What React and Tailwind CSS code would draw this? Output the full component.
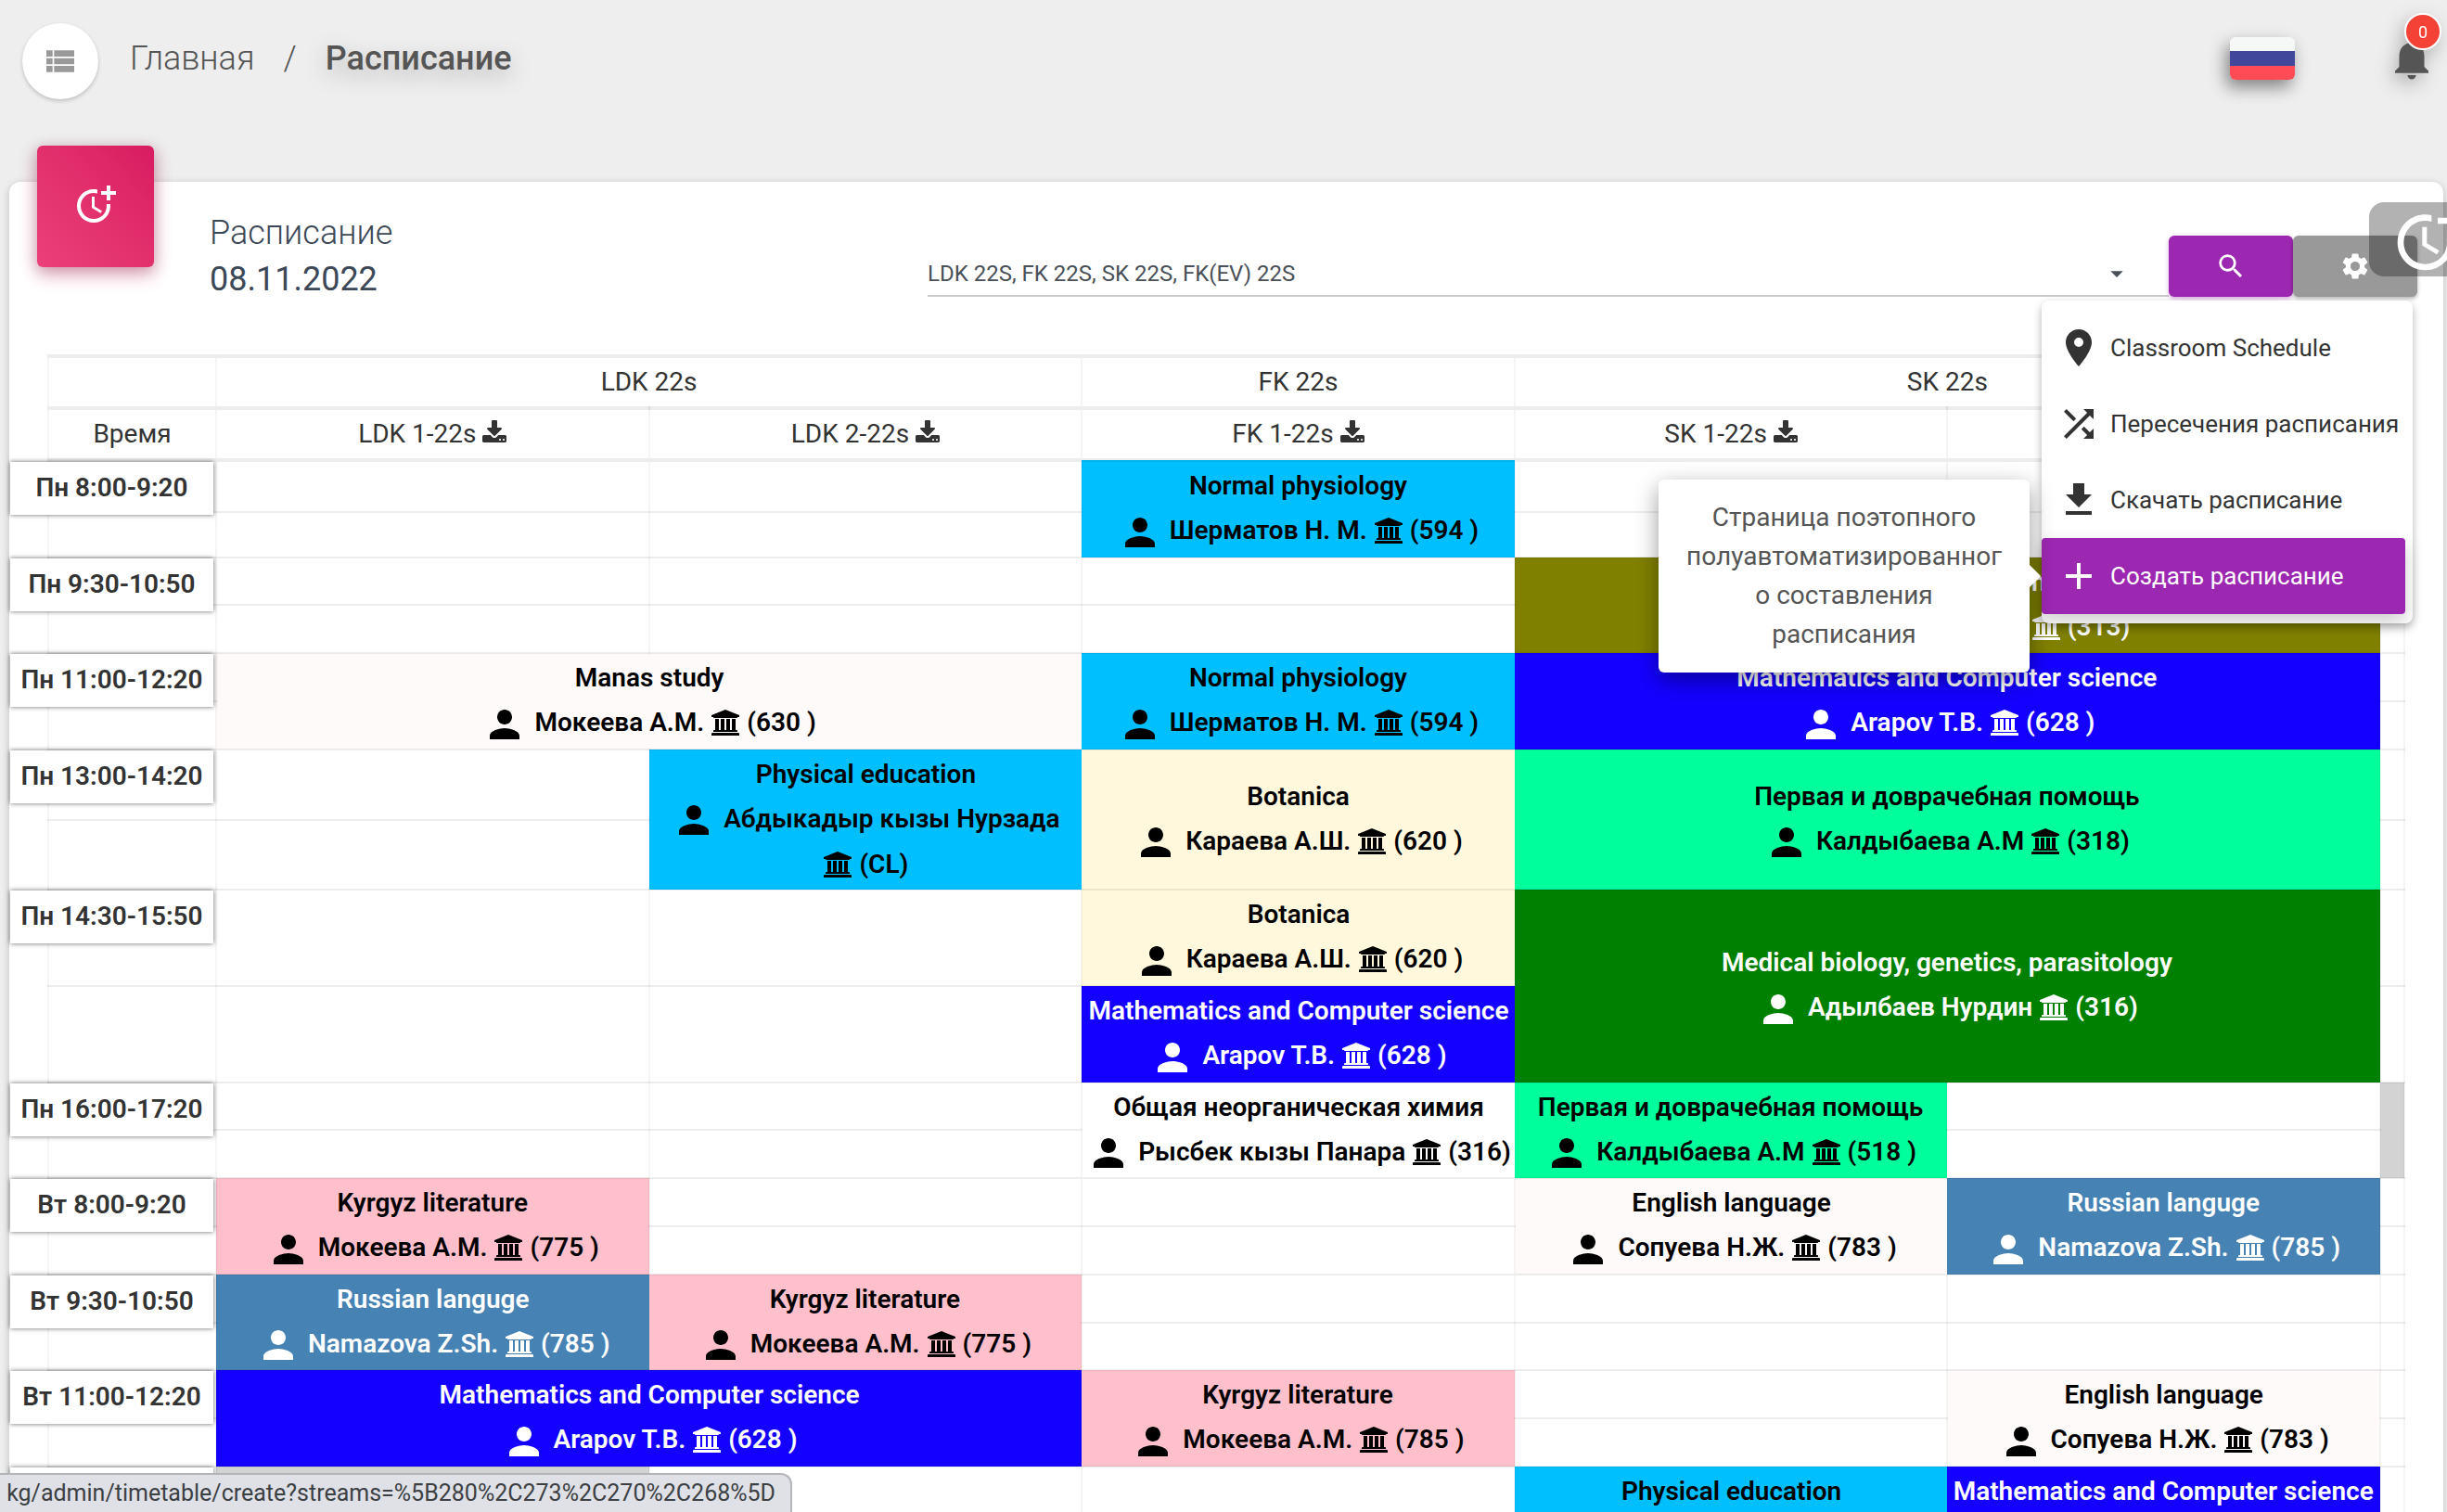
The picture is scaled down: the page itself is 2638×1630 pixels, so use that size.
import React from "react";
import {
  MdPerson, MdMoreTime, MdViewList, MdNotifications, MdSearch, MdSettings,
  MdPlace, MdShuffle, MdDownload, MdAdd, MdArrowDropDown,
} from "react-icons/md";

const COLORS = {
  sky: "bg-[#00bfff] text-black",
  snow: "bg-[#fffafa] text-black",
  corn: "bg-[#fff8dc] text-black",
  blue: "bg-[#1400ff] text-white",
  mint: "bg-[#00ff9c] text-black",
  green: "bg-[#008000] text-white",
  olive: "bg-[#808000] text-white",
  pink: "bg-[#ffc0cb] text-black",
  steel: "bg-[#4682b4] text-white",
  white: "bg-white text-black",
  grey: "bg-[#d3d3d3]",
};

const L = (color, title, teacher, room, colSpan = 1, rowSpan = 2) => ({ color, title, teacher, room, colSpan, rowSpan });
const blank = (color, rowSpan) => ({ color, colSpan: 1, rowSpan, empty: true });
const _ = null;

const physiology = () => L("sky", "Normal physiology", "Шерматов Н. М.", "(594 )");
const maths = (colSpan, rowSpan) => L("blue", "Mathematics and Computer science", "Arapov T.B.", "(628 )", colSpan, rowSpan);
const kyrgyz = (room) => L("pink", "Kyrgyz literature", "Мокеева А.М.", room);
const russian = () => L("steel", "Russian languge", "Namazova Z.Sh.", "(785 )");
const english = () => L("snow", "English language", "Сопуева Н.Ж.", "(783 )");

const ROWS = [
  { h: "h-[56px]", time: "Пн 8:00-9:20", cells: [_, _, physiology(), _, _, _] },
  { h: "h-[49px]", cells: [_, _, _, _, _] },
  { h: "h-[51px]", time: "Пн 9:30-10:50", cells: [_, _, _, L("olive", "Latin language and terminology", "Калдыбаева А.М", "(313)", 2), _] },
  { h: "h-[52px]", cells: [_, _, _, _] },
  { h: "h-[52px]", time: "Пн 11:00-12:20", cells: [L("snow", "Manas study", "Мокеева А.М.", "(630 )", 2), physiology(), maths(2, 2), _] },
  { h: "h-[52px]", cells: [_] },
  { h: "h-[76px]", time: "Пн 13:00-14:20", cells: [_, L("sky", "Physical education", "Абдыкадыр кызы Нурзада", "(CL)"), L("corn", "Botanica", "Караева А.Ш.", "(620 )"), L("mint", "Первая и доврачебная помощь", "Калдыбаева А.М", "(318)", 2), _] },
  { h: "h-[75px]", cells: [_, _] },
  { h: "h-[104px]", time: "Пн 14:30-15:50", cells: [_, _, L("corn", "Botanica", "Караева А.Ш.", "(620 )", 1, 1), L("green", "Medical biology, genetics, parasitology", "Адылбаев Нурдин", "(316)", 2), _] },
  { h: "h-[104px]", cells: [_, _, maths(1, 1), _] },
  { h: "h-[51px]", time: "Пн 16:00-17:20", cells: [_, _, L("white", "Общая неорганическая химия", "Рысбек кызы Панара", "(316)"), L("mint", "Первая и доврачебная помощь", "Калдыбаева А.М", "(518 )"), _, blank("grey", 2)] },
  { h: "h-[52px]", cells: [_, _, _] },
  { h: "h-[52px]", time: "Вт 8:00-9:20", cells: [kyrgyz("(775 )"), _, _, english(), russian(), _] },
  { h: "h-[52px]", cells: [_, _, _] },
  { h: "h-[52px]", time: "Вт 9:30-10:50", cells: [russian(), kyrgyz("(775 )"), _, _, _, _] },
  { h: "h-[51px]", cells: [_, _, _, _] },
  { h: "h-[52px]", time: "Вт 11:00-12:20", cells: [maths(2, 2), kyrgyz("(785 )"), _, english(), _] },
  { h: "h-[52px]", cells: [_, _] },
  { h: "h-[52px]", time: "Вт 13:00-14:20", cells: [blank("grey", 2), _, _, L("sky", "Physical education", "Мокеева А.М.", "(CL)"), maths(1, 2), _] },
  { h: "h-[52px]", cells: [_, _, _] },
];

const EDGE = "border-2 border-x-black/4 border-y-black/7";

function InstitutionIcon() {
  return (
    <svg viewBox="0 0 1920 1792" fill="currentColor" aria-hidden="true" className="mx-px inline h-7 w-[30px] align-[-5px]">
      <path d="M960 0l960 384v128h-128q0 26-20.5 45t-48.5 19h-1526q-28 0-48.5-19t-20.5-45h-128v-128zM256 640h256v768h128v-768h256v768h128v-768h256v768h128v-768h256v768h59q28 0 48.5 19t20.5 45v64h-1664v-64q0-26 20.5-45t48.5-19h59v-768zM1851 1600q28 0 48.5 19t20.5 45v128h-1920v-128q0-26 20.5-45t48.5-19h1782z" />
    </svg>
  );
}

function TrayDownloadIcon() {
  return (
    <svg viewBox="64 0 1664 1536" fill="currentColor" aria-hidden="true" className="inline h-6 w-[26px] align-baseline">
      <path d="M1344 1344q0-26-19-45t-45-19-45 19-19 45 19 45 45 19 45-19 19-45zm256 0q0-26-19-45t-45-19-45 19-19 45 19 45 45 19 45-19 19-45zm128-224v320q0 40-28 68t-68 28h-1472q-40 0-68-28t-28-68v-320q0-40 28-68t68-28h465l135 136q58 56 136 56t136-56l136-136h464q40 0 68 28t28 68zm-325-569q17 41-14 70l-448 448q-18 19-45 19t-45-19l-448-448q-31-29-14-70 17-39 59-39h256v-448q0-26 19-45t45-19h256q26 0 45 19t19 45v448h256q42 0 59 39z" />
    </svg>
  );
}

function Lesson({ cell }) {
  if (!cell) return <td className={EDGE} />;
  if (cell.empty) return <td rowSpan={cell.rowSpan} className={`${EDGE} ${COLORS[cell.color]}`} />;
  return (
    <td rowSpan={cell.rowSpan} colSpan={cell.colSpan} className={`border-y-2 border-y-black/7 p-0 text-center align-middle text-[28px] leading-[48px] font-semibold ${COLORS[cell.color]}`}>
      <div>{cell.title}</div>
      <div>
        <MdPerson className="mr-px inline size-12 align-middle" /> {cell.teacher}{" "}
        <span className="whitespace-nowrap">
          <InstitutionIcon /> {cell.room}
        </span>
      </div>
    </td>
  );
}

function Timetable() {
  const head = "border-x-2 border-y-4 border-x-black/4 border-y-black/7 p-0 text-center text-[28px] font-normal";
  return (
    <table className="w-full table-fixed border-collapse text-[#333]">
      <colgroup>
        <col className="w-[181px]" />
        <col /><col /><col /><col /><col />
        <col className="w-[26px]" />
      </colgroup>
      <thead>
        <tr className="h-[56px]">
          <td className={head} />
          <th colSpan={2} className={head}>LDK 22s</th>
          <th className={head}>FK 22s</th>
          <th colSpan={2} className={head}>SK 22s</th>
          <td className={head} />
        </tr>
        <tr className="h-[56px]">
          <th className={head}>Время</th>
          {["LDK 1-22s", "LDK 2-22s", "FK 1-22s", "SK 1-22s", ""].map((g) => (
            <th key={g} className={head}>
              {g && (
                <>
                  {g}{" "}
                  <a href="#download" aria-label={`Скачать ${g}`}>
                    <TrayDownloadIcon />
                  </a>
                </>
              )}
            </th>
          ))}
          <td className={head} />
        </tr>
      </thead>
      <tbody>
        {ROWS.map((row, i) => (
          <tr key={i} className={row.h}>
            <th className={`relative p-0 ${EDGE}`}>
              {row.time && (
                <span className="absolute top-0 -left-[42px] z-10 flex h-[57px] w-[219px] items-center justify-center bg-white pb-[2px] text-[28px] font-semibold whitespace-nowrap text-[#333] shadow-[0_0_5px_rgba(0,0,0,0.6)]">
                  {row.time}
                </span>
              )}
            </th>
            {row.cells.map((c, j) => <Lesson key={j} cell={c} />)}
          </tr>
        ))}
      </tbody>
    </table>
  );
}

function Menu() {
  const item = "mr-2 flex h-[82px] items-center gap-[10px] rounded pl-4 whitespace-nowrap";
  return (
    <nav className="absolute top-[70px] right-[5px] z-30 w-[400px] rounded-lg bg-white py-[10px] text-[26px] text-[#333] shadow-[0_4px_10px_rgba(0,0,0,0.3)]">
      <a href="#classroom" className={item}><MdPlace className="size-12 shrink-0" />Classroom Schedule</a>
      <a href="#crossings" className={item}><MdShuffle className="size-12 shrink-0" />Пересечения расписания</a>
      <a href="#download" className={item}><MdDownload className="size-12 shrink-0" />Скачать расписание</a>
      <a href="#create" className={`relative bg-[#9c27b0] text-white shadow-[0_8px_20px_rgba(0,0,0,0.2)] ${item}`}>
        <MdAdd className="size-12 shrink-0" />Создать расписание
        <span role="tooltip" className="absolute top-1/2 right-full mr-[13px] w-[400px] -translate-y-1/2 rounded-md bg-white px-[30px] py-5 text-center text-[28px] leading-[42px] wrap-break-word whitespace-normal text-[#555] shadow-[0_8px_24px_rgba(0,0,0,0.4)]">
          Страница поэтопного полуавтоматизированного составления расписания
          <span className="absolute top-1/2 left-full -translate-y-1/2 border-y-[12px] border-l-[12px] border-y-transparent border-l-white" />
        </span>
      </a>
    </nav>
  );
}

export default function App() {
  return (
    <div className="relative h-screen overflow-hidden bg-[#eee] pr-1 pl-[10px] font-[Roboto,sans-serif] text-[#333]">
      <header className="flex h-[132px] items-center pr-[7px] pl-[14px] text-[36px] text-[#555]">
        <button type="button" aria-label="Меню" className="flex size-[82px] items-center justify-center rounded-full bg-white text-[#999] shadow-[0_2px_4px_rgba(0,0,0,0.2)]">
          <MdViewList className="size-10" />
        </button>
        <nav className="flex pb-[6px] pl-[34px] font-light">
          <a href="#home">Главная</a>
          <span className="px-[31px]">/</span>
          <span className="font-medium [text-shadow:0_8px_24px_rgba(0,0,0,0.25)]">Расписание</span>
        </nav>
        <button type="button" aria-label="Русский" className="mr-[99px] mb-[6px] ml-auto flex h-[46px] w-[70px] flex-col overflow-hidden rounded-md shadow-[-4px_8px_18px_rgba(0,0,0,0.45)]">
          <span className="w-full flex-1 bg-[#f5f8f7]" />
          <span className="w-full flex-1 bg-[#41479b]" />
          <span className="w-full flex-1 bg-[#ff4b55]" />
        </button>
        <button type="button" aria-label="Уведомления" className="relative mb-[6px] drop-shadow-[-4px_8px_10px_rgba(0,0,0,0.25)]">
          <MdNotifications className="size-[54px]" />
          <span className="absolute -top-[22px] left-[19px] flex size-10 items-center justify-center rounded-full border-2 border-white bg-[#f44336] text-[18px] text-white">0</span>
        </button>
      </header>

      <main className="mt-16 rounded-xl bg-white px-[41px] shadow-[0_2px_8px_rgba(0,0,0,0.2)]">
        <div className="flex h-[186px]">
          <div className="-mt-[39px] -ml-[11px] flex h-[131px] w-[126px] items-center justify-center rounded-md bg-linear-to-tr from-[#ec407a] to-[#d81b60] pb-[6px] text-white shadow-[0_8px_20px_rgba(233,30,99,0.3),0_4px_16px_rgba(0,0,0,0.25)]">
            <MdMoreTime className="size-12" />
          </div>
          <h1 className="pt-[30px] pl-[60px] text-[36px] leading-[50px] font-light text-[#3c4858]">
            Расписание
            <span className="block font-normal">08.11.2022</span>
          </h1>
          <div className="relative mt-[58px] -mr-[13px] ml-auto flex h-[66px] w-[1606px]">
            <button type="button" aria-label="Группы" className="flex flex-1 items-center border-b-2 border-[#ccc] pt-[18px] pr-10 text-left text-[24px] text-[#495057]">
              <span className="flex-1">LDK 22S, FK 22S, SK 22S, FK(EV) 22S</span>
              <MdArrowDropDown className="size-8" />
            </button>
            <button type="button" aria-label="Поиск" className="flex w-[134px] items-center justify-center rounded-md bg-[#9c27b0] text-white shadow-[0_2px_4px_rgba(156,39,176,0.4)]">
              <MdSearch className="size-[34px]" />
            </button>
            <button type="button" aria-label="Настройки" className="flex w-[134px] items-center justify-center rounded-md bg-[#999] text-white shadow-[0_2px_4px_rgba(0,0,0,0.3)]">
              <MdSettings className="size-[34px]" />
            </button>
            <Menu />
          </div>
        </div>
        <Timetable />
      </main>

      <button type="button" aria-label="Быстрое расписание" className="absolute top-[218px] -right-[24px] z-40 flex h-20 w-[108px] items-center rounded-2xl rounded-r-none bg-black/30 pl-6 text-white">
        <MdMoreTime className="size-20 shrink-0" />
      </button>
      <div className="absolute bottom-0 left-0 z-40 flex h-[42px] w-[854px] justify-end overflow-hidden rounded-tr-xl border-t-2 border-r-2 border-[#b4b5b9] bg-[#dfe1e7] pr-4 text-[25px] leading-[40px] whitespace-nowrap text-[#3c4043]">
        kg/admin/timetable/create?streams=%5B280%2C273%2C270%2C268%5D
      </div>
    </div>
  );
}
